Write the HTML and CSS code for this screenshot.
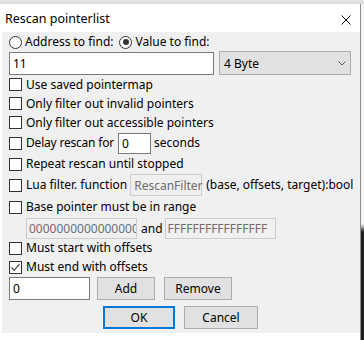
FILE: index.html
```html
<!DOCTYPE html>
<html>
<head>
<meta charset="utf-8">
<link rel="stylesheet" href="styles.css">
</head>
<body>
<div class="topstrip"></div>
<div class="screen">
<div class="dialog">
  <div class="titlebar">
    <span class="title">Rescan pointerlist</span>
    <svg class="close" width="10" height="10" viewBox="0 0 10 10"><path d="M0.5 0.5L9.5 9.5M9.5 0.5L0.5 9.5" stroke="#000" stroke-width="1" fill="none"/></svg>
  </div>
  <div class="content">
    <div class="row r-radio">
      <span class="radio"></span><span class="lbl">Address to find:</span>
      <span class="radio checked"></span><span class="lbl">Value to find:</span>
    </div>
    <div class="row r-inputs">
      <div class="input value">11</div>
      <div class="select"><span>4 Byte</span>
        <svg width="8" height="5" viewBox="0 0 8 5"><path d="M0.5 0.5L4 4L7.5 0.5" stroke="#555" fill="none"/></svg>
      </div>
    </div>
    <div class="row r-cb h19"><span class="cb"></span><span class="lbl">Use saved pointermap</span></div>
    <div class="row r-cb h19"><span class="cb"></span><span class="lbl">Only filter out invalid pointers</span></div>
    <div class="row r-cb h19"><span class="cb"></span><span class="lbl">Only filter out accessible pointers</span></div>
    <div class="row r-cb h22"><span class="cb"></span><span class="lbl tight">Delay rescan for</span><div class="input delay">0</div><span class="lbl">seconds</span></div>
    <div class="row r-cb h20"><span class="cb"></span><span class="lbl">Repeat rescan until stopped</span></div>
    <div class="row r-cb h22"><span class="cb"></span><span class="lbl">Lua filter. function</span><div class="input disabled lua">RescanFilter</div><span class="lbl">(base, offsets, target):bool</span></div>
    <div class="row r-cb h22"><span class="cb"></span><span class="lbl">Base pointer must be in range</span></div>
    <div class="row r-range"><div class="input disabled hex">0000000000000000</div><span class="lbl">and</span><div class="input disabled hex">FFFFFFFFFFFFFFFF</div></div>
    <div class="row r-cb h18"><span class="cb"></span><span class="lbl">Must start with offsets</span></div>
    <div class="row r-cb h20"><span class="cb checked"><svg width="11" height="11" viewBox="0 0 11 11"><path d="M1.5 5.5L4.2 8.3L9.5 2.2" stroke="#333" stroke-width="1.1" fill="none"/></svg></span><span class="lbl">Must end with offsets</span></div>
    <div class="row r-offs"><div class="input offset">0</div><div class="btn add">Add</div><div class="btn remove">Remove</div></div>
    <div class="row r-ok"><div class="btn ok">OK</div><div class="btn cancel">Cancel</div></div>
  </div>
</div>
<div class="edge"></div>
</div>
</body>
</html>
```
FILE: styles.css
```css
html, body { margin: 0; padding: 0; }
body {
  width: 364px; height: 340px; overflow: hidden; background: #fff;
  font-family: "Noto Sans", "Noto Sans CJK KR", sans-serif;
  font-size: 12px; color: #000;
}
.topstrip { height: 4px; background: linear-gradient(#e6e6e6, #dadada); }
.screen { display: flex; }
.dialog { margin-left: 2px; width: 358px; border-right: 1px solid #8c8c8c; }
.edge { flex: 1; background: linear-gradient(#f4f4f4 0, #f4f4f4 220px, #1e1e1e 228px, #1e1e1e 100%); height: 336px; }
.titlebar {
  height: 28px; background: #fff; display: flex; align-items: center;
  justify-content: space-between; padding: 0 9px 0 3px;
}
.title { font-size: 12.5px; }
.close { margin-top: 4px; }
.content { background: #f0f0f0; height: 301px; padding-top: 1px; box-sizing: border-box; display: flex; flex-direction: column; }
.row { display: flex; align-items: center; padding-left: 7px; white-space: nowrap; }
.r-radio { height: 18px; }
.r-inputs { height: 24px; }
.h18 { height: 18px; } .h19 { height: 19px; } .h20 { height: 20px; } .h22 { height: 22px; }
.lbl { line-height: 14px; }
.lbl.tight { letter-spacing: -0.2px; }
.radio {
  width: 11px; height: 11px; border: 1px solid #333; border-radius: 50%; background: #fff;
  margin-right: 3px; position: relative; flex: none;
}
.radio.checked { margin-left: 6px; }
.radio.checked::after {
  content: ""; position: absolute; left: 2.5px; top: 2.5px; width: 6px; height: 6px; border-radius: 50%; background: #333;
}
.cb {
  width: 11px; height: 11px; border: 1px solid #333; background: #fff; margin-right: 4px; flex: none;
  display: flex; align-items: center; justify-content: center;
}
.input {
  box-sizing: border-box; height: 22px; border: 1px solid #7a7a7a; background: #fff;
  padding-left: 3px; display: flex; align-items: center; flex: none;
}
.input.value { width: 205px; height: 23px; }
.select {
  box-sizing: border-box; width: 132px; height: 24px; margin-left: 5px; background: #e1e1e1;
  border: 1px solid #adadad; display: flex; align-items: center; justify-content: space-between;
  padding: 0 4px 0 4px;
}
.input.delay { width: 33px; margin: 0 3px 0 4px; height: 21px; }
.input.disabled { border-color: #cccccc; background: #f0f0f0; color: #6d6d6d; }
.input.lua { width: 72px; margin: 0 4px 0 3px; }
.r-range { height: 21px; padding-left: 24px; }
.input.hex { width: 111px; height: 21px; padding-left: 2px; overflow: hidden; color: #7a6a6a; }
.r-range .lbl { margin: 0 2px 0 4px; }
.r-offs { height: 23px; }
.input.offset { width: 81px; height: 23px; }
.btn {
  box-sizing: border-box; height: 23px; background: #e1e1e1; border: 1px solid #adadad;
  display: flex; align-items: center; justify-content: center; flex: none;
}
.btn.add { width: 58px; margin-left: 7px; }
.btn.remove { width: 68px; margin-left: 9px; }
.r-ok { height: 23px; margin-top: 6px; padding-left: 101px; }
.btn.ok { width: 72px; border: 2px solid #0078d7; }
.btn.cancel { width: 74px; margin-left: 9px; }
```
